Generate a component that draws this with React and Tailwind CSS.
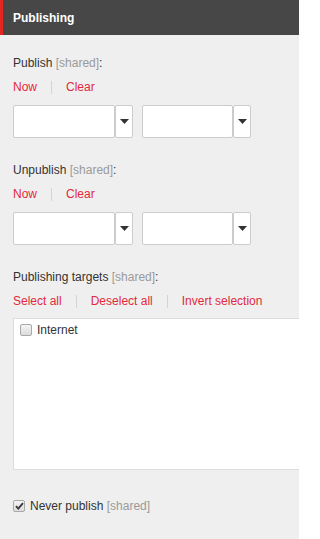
import React from 'react'

const font = { fontFamily: '"Liberation Sans", Arial, sans-serif' }

const Sep = () => <span className="mx-[14px] h-[13px] w-px bg-[#d4d4d4]" />

const Links = ({ items }) => (
  <div className="flex items-center h-4 leading-4 text-[12px] text-[#e2293d]">
    {items.map((t, i) => (
      <React.Fragment key={t}>
        {i > 0 && <Sep />}
        <a href="#" className="hover:underline">{t}</a>
      </React.Fragment>
    ))}
  </div>
)

const Label = ({ text, colon = true }) => (
  <div className="h-4 leading-4 text-[12px] text-[#333]">
    {text} <span className="text-[#9a9a9a]">[shared]</span>{colon ? ':' : ''}
  </div>
)

const Arrow = () => (
  <svg width="9" height="5" viewBox="0 0 9 5">
    <path d="M0 0h9L4.5 5z" fill="#333" />
  </svg>
)

const Combo = ({ w }) => (
  <div className="flex">
    <div className={`h-[33px] ${w} bg-white border border-[#cccccc] rounded-[2px]`} />
    <div className="h-[33px] w-[18px] bg-white border border-[#cccccc] rounded-[2px] flex items-center justify-center">
      <Arrow />
    </div>
  </div>
)

const DateRow = () => (
  <div className="flex gap-[9px]">
    <Combo w="w-[102px]" />
    <Combo w="w-[91px]" />
  </div>
)

const Section = ({ label }) => (
  <div>
    <Label text={label} />
    <div className="mt-2">
      <Links items={['Now', 'Clear']} />
    </div>
    <div className="mt-[10px]">
      <DateRow />
    </div>
  </div>
)

const Box = ({ checked }) => (
  <span className="w-[12px] h-[12px] rounded-[2px] border border-[#a9a9a9] bg-gradient-to-b from-[#f4f4f4] to-[#dcdcdc] flex items-center justify-center">
    {checked && (
      <svg width="9" height="8" viewBox="0 0 9 8">
        <path d="M1 4.2l2.3 2.4L8 1.2" stroke="#3a3a3a" strokeWidth="1.9" fill="none" />
      </svg>
    )}
  </span>
)

export default function App() {
  return (
    <div className="w-[299px] h-[539px] bg-[#efefef] overflow-hidden" style={font}>
      <div className="h-[35px] bg-[#474747] border-l-[3px] border-[#e3261f] flex items-center pl-[10px]">
        <span className="text-white font-bold text-[12px]">Publishing</span>
      </div>

      <div className="pl-[13px] pt-[20px]">
        <Section label="Publish" />
        <div className="mt-[24px]">
          <Section label="Unpublish" />
        </div>

        <div className="mt-[24px]">
          <Label text="Publishing targets" />
          <div className="mt-2">
            <Links items={['Select all', 'Deselect all', 'Invert selection']} />
          </div>
          <div className="mt-[9px] h-[152px] bg-white border border-[#dddddd] border-r-0 pl-[6px] pt-[3px]">
            <label className="flex items-center gap-[5px] text-[12px] leading-4 text-[#333]">
              <Box />
              <span>Internet</span>
            </label>
          </div>
        </div>

        <label className="mt-[28px] flex items-center gap-[5px] text-[12px] leading-4 text-[#333]">
          <Box checked />
          <span>
            Never publish <span className="text-[#9a9a9a]">[shared]</span>
          </span>
        </label>
      </div>
    </div>
  )
}
